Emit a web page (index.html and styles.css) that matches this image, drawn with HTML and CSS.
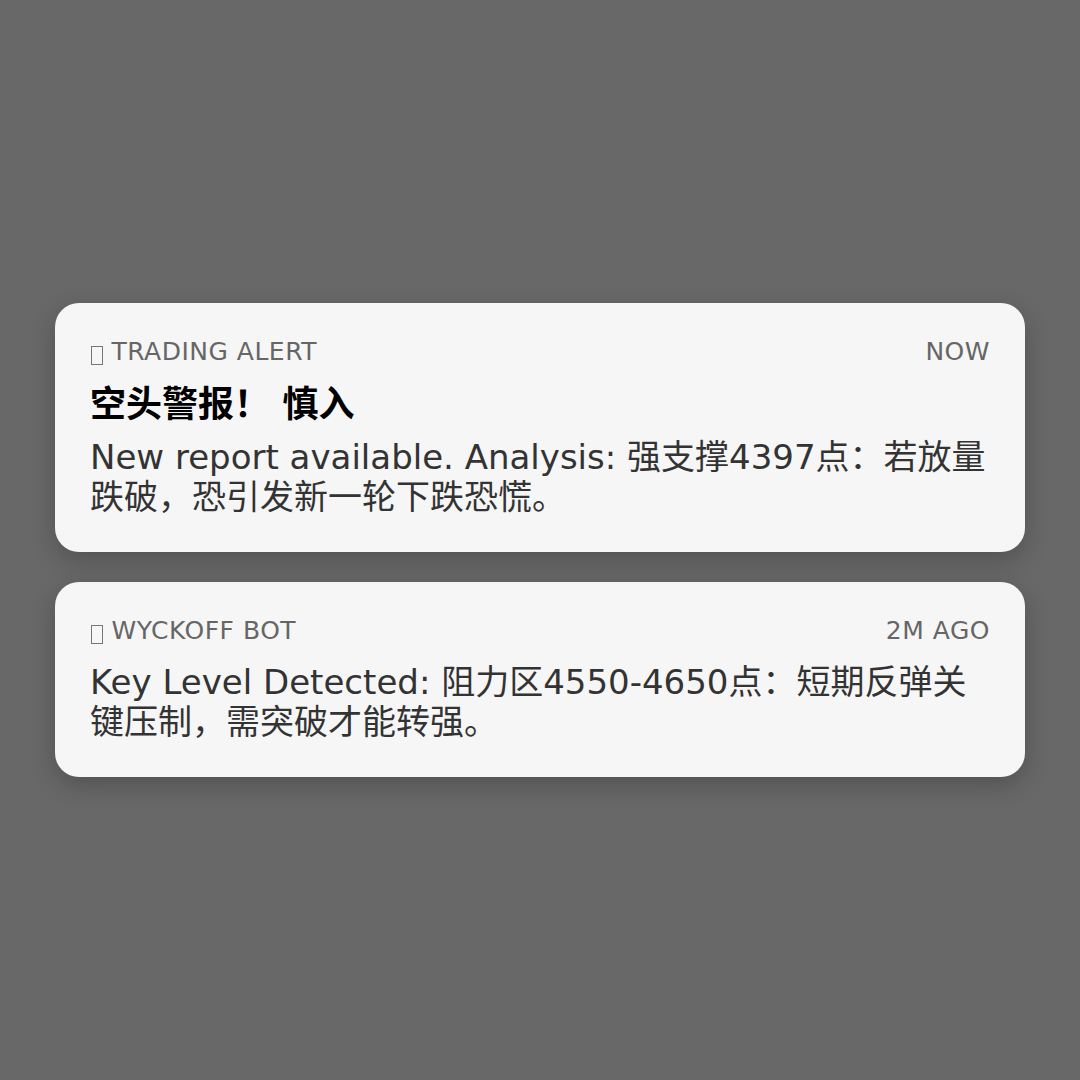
FILE: index.html
```html
<!DOCTYPE html>
<html lang="zh-CN">
<head>
    <meta charset="UTF-8">
    <meta name="viewport" content="width=device-width, initial-scale=1.0">
    <title>Notifications</title>
    <link rel="stylesheet" href="styles.css">
</head>
<body>
    <div class="stack">
        <div class="card">
            <div class="card-head">
                <span class="app"><span class="tofu"></span> TRADING ALERT</span>
                <span class="time">NOW</span>
            </div>
            <div class="title">空头警报！ 慎入</div>
            <div class="body">New report available. Analysis: 强支撑4397点：若放量跌破，恐引发新一轮下跌恐慌。</div>
        </div>

        <div class="card">
            <div class="card-head">
                <span class="app"><span class="tofu"></span> WYCKOFF BOT</span>
                <span class="time">2M AGO</span>
            </div>
            <div class="body">Key Level Detected: 阻力区4550-4650点：短期反弹关键压制，需突破才能转强。</div>
        </div>
    </div>
</body>
</html>
```

FILE: styles.css
```css
html, body {
    height: 100%;
}
body {
    margin: 0;
    background-color: #686868;
    font-family: "DejaVu Sans", "Noto Sans CJK SC", sans-serif;
    display: flex;
    align-items: center;
    justify-content: center;
}
.stack {
    width: 970px;
    display: flex;
    flex-direction: column;
    gap: 30px;
}
.card {
    background-color: #f6f6f6;
    border-radius: 24px;
    padding: 35px;
    box-shadow: 0 8px 24px rgba(0, 0, 0, 0.22);
}
.card-head {
    display: flex;
    justify-content: space-between;
    font-size: 25px;
    line-height: 28px;
    letter-spacing: 0.5px;
    color: #666;
    margin-bottom: 17px;
}
.tofu {
    display: inline-block;
    width: 10px;
    height: 17px;
    margin-left: 1px;
    border: 1.5px solid #777;
    vertical-align: -5px;
}
.title {
    font-size: 36px;
    line-height: 44px;
    font-weight: bold;
    color: #000;
    margin-bottom: 10px;
}
.body {
    font-size: 34px;
    line-height: 40px;
    color: #333;
}
```
